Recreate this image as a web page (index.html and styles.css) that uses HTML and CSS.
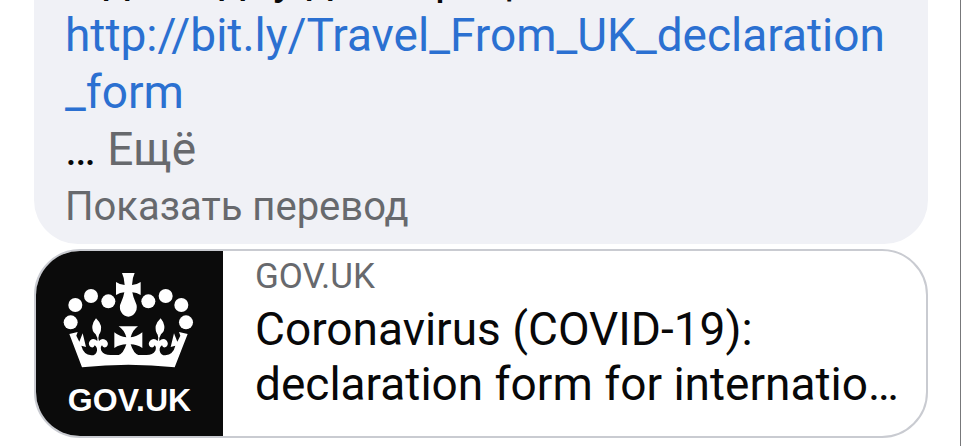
FILE: index.html
```html
<!DOCTYPE html>
<html lang="ru">
<head>
<meta charset="utf-8">
<title>Комментарий</title>
<link rel="stylesheet" href="styles.css">
</head>
<body>
<main class="comment">
  <section class="bubble">
    <p class="message">и для одну декларацию<br>
      <a class="link" href="http://bit.ly/Travel_From_UK_declaration_form">http://bit.ly/Travel_From_UK_declaration<wbr>_form</a><br>
      … <button class="more" type="button">Ещё</button></p>
    <button class="translate" type="button">Показать перевод</button>
  </section>
  <a class="card" href="http://bit.ly/Travel_From_UK_declaration_form">
    <span class="logo">
      <svg class="crown" viewBox="0 0 420 330" aria-hidden="true">
        <g fill="#fff">
          <circle cx="32" cy="172" r="21"/>
          <circle cx="46" cy="120" r="21"/>
          <circle cx="93" cy="93" r="21"/>
          <circle cx="145" cy="109" r="21"/>
          <circle cx="265" cy="109" r="21"/>
          <circle cx="317" cy="93" r="21"/>
          <circle cx="364" cy="120" r="21"/>
          <circle cx="378" cy="172" r="21"/>
          <path d="M186 24H224Q217 38 216 60Q231 59 242 51V90Q230 83 217 82Q219 95 226 110Q235 128 226 142Q218 155 205 155Q192 155 184 142Q175 128 184 110Q191 95 193 82Q180 83 168 90V51Q179 59 194 60Q193 38 186 24Z"/>
          <path d="M28 207L53 201L49 212L58 230L68 205L78 246L64 242Q70 268 94 271Q108 271 111 257Q112 246 104 241Q101 251 91 245Q82 237 91 226Q101 217 112 228Q114 219 107 208Q95 198 97 183Q100 169 108 160Q119 170 123 183Q125 198 117 209Q113 220 117 228Q128 217 140 227Q148 237 139 246Q129 250 126 241Q120 247 124 257Q132 270 151 270H176Q190 266 199 238Q180 238 163 249V202Q180 216 199 217Q193 195 176 184H234Q218 195 212 217Q230 216 247 202V249Q230 238 212 238Q221 266 235 270H260Q278 270 286 257Q290 247 284 241Q281 250 271 246Q262 237 270 227Q282 217 293 228Q297 220 293 209Q285 198 287 183Q291 170 302 160Q310 169 313 183Q315 198 303 208Q296 219 298 228Q309 217 319 226Q328 237 319 245Q309 251 306 241Q298 246 299 257Q302 271 316 271Q340 268 346 242L332 246L342 205L352 230L361 212L357 201L383 207L344 307Q205 291 66 307Z"/>
        </g>
      </svg>
      <span class="brand">GOV.UK</span>
    </span>
    <span class="details">
      <span class="source">GOV.UK</span>
      <span class="title">Coronavirus (COVID-19): declaration form for internatio…</span>
    </span>
  </a>
</main>
</body>
</html>
```
FILE: styles.css
```css
* {
  box-sizing: border-box;
}

body {
  margin: 0;
  min-height: 100vh;
  overflow: hidden;
  background: #fff;
  border-right: 1px solid #77787a;
  color: #080809;
  font-family: Roboto, "Liberation Sans", sans-serif;
}

.comment {
  display: flex;
  flex-direction: column;
  gap: 5px;
  padding: 0 32px 8px 34px;
}

.bubble {
  padding: 0 31px 10px;
  background: #f0f1f6;
  border-radius: 0 0 44px 44px;
}

/* The thread is scrolled part of the way into the message. */
.message {
  margin: -50px 0 0;
  font-size: 46px;
  line-height: 57px;
}

.link {
  color: #2b70d1;
  text-decoration: none;
}

.more,
.translate {
  padding: 0;
  border: 0;
  background: none;
  color: #67696d;
  font: inherit;
}

.translate {
  display: block;
  padding-top: 2px;
  font-size: 40px;
  line-height: 54px;
}

.card {
  display: flex;
  overflow: hidden;
  min-height: 189px;
  border: 2px solid #c9cbd1;
  border-radius: 46px;
  color: inherit;
  text-decoration: none;
}

.logo {
  display: flex;
  flex: none;
  flex-direction: column;
  align-items: center;
  width: 187px;
  padding-top: 14px;
  background: #0b0b0b;
}

.crown {
  width: 140px;
  height: 110px;
}

.brand {
  color: #fff;
  font: bold 32px/50px "Liberation Sans", sans-serif;
}

.details {
  flex: 1;
  min-width: 0;
  padding: 4px 20px 0 32px;
}

.source {
  display: block;
  color: #67696d;
  font-size: 35px;
  line-height: 44px;
}

.title {
  display: block;
  padding-top: 3px;
  font-size: 46px;
  line-height: 55px;
}
```
